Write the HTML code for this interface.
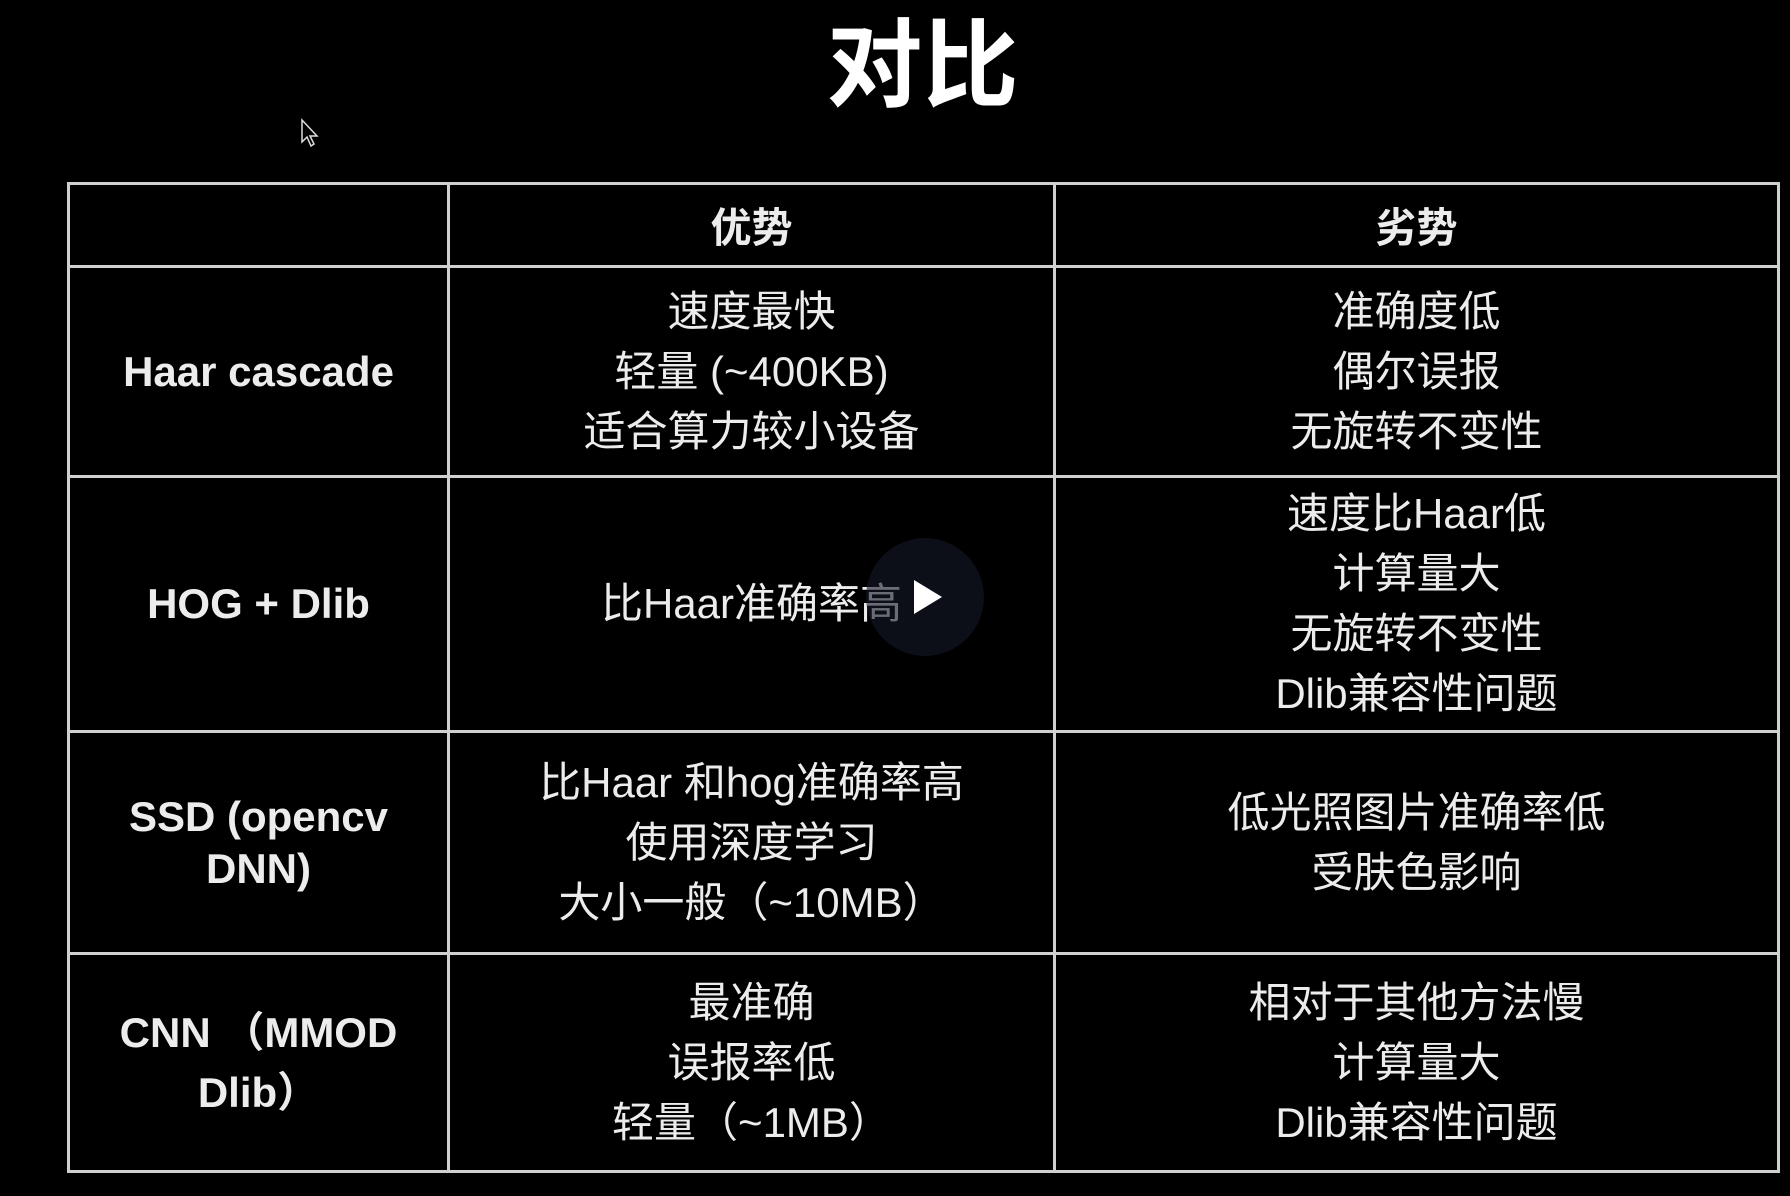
<!DOCTYPE html>
<html><head><meta charset="utf-8"><style>
html,body{margin:0;padding:0;background:#000;width:1790px;height:1196px;overflow:hidden}
body{position:relative;font-family:"Liberation Sans","Noto Sans CJK SC",sans-serif;color:#ececec}
.h{position:absolute;height:3px;background:#d0d0d0}
.v{position:absolute;width:3px;background:#d0d0d0}
.c{position:absolute;display:flex;flex-direction:column;align-items:center;justify-content:center;text-align:center;font-size:42px;line-height:60px;white-space:nowrap}
.b{font-weight:bold;font-size:42px;line-height:52px}
.hd{font-weight:bold;font-size:41px}
.title{position:absolute;left:0;width:1845px;top:-12px;text-align:center;font-size:96px;font-weight:bold;color:#fff}
</style></head><body>
<div class="title">对比</div>
<svg style="position:absolute;left:300px;top:118px" width="22" height="30" viewBox="0 0 22 30"><path d="M2 2 L2 24 L7 19 L11 28 L14 26 L10 18 L17 18 Z" fill="#000" stroke="#ddd" stroke-width="1.5"/></svg>

<div class="h" style="left:67px;width:1713px;top:182px"></div>
<div class="h" style="left:67px;width:1713px;top:265px"></div>
<div class="h" style="left:67px;width:1713px;top:475px"></div>
<div class="h" style="left:67px;width:1713px;top:730px"></div>
<div class="h" style="left:67px;width:1713px;top:952px"></div>
<div class="h" style="left:67px;width:1713px;top:1170px"></div>
<div class="v" style="left:67px;top:182px;height:991px"></div>
<div class="v" style="left:447px;top:182px;height:991px"></div>
<div class="v" style="left:1053px;top:182px;height:991px"></div>
<div class="v" style="left:1777px;top:182px;height:991px"></div>

<div class="c hd" style="left:450px;width:603px;top:188px;height:80px">优势</div>
<div class="c hd" style="left:1056px;width:721px;top:188px;height:80px">劣势</div>

<div class="c b" style="left:70px;width:377px;top:268px;height:207px">Haar cascade</div>
<div class="c" style="left:450px;width:603px;top:268px;height:207px"><div>速度最快</div><div>轻量 (~400KB)</div><div>适合算力较小设备</div></div>
<div class="c" style="left:1056px;width:721px;top:268px;height:207px"><div>准确度低</div><div>偶尔误报</div><div>无旋转不变性</div></div>

<div class="c b" style="left:70px;width:377px;top:478px;height:252px">HOG + Dlib</div>
<div class="c" style="left:450px;width:603px;top:478px;height:252px"><div>比Haar准确率高</div></div>
<div class="c" style="left:1056px;width:721px;top:478px;height:252px"><div>速度比Haar低</div><div>计算量大</div><div>无旋转不变性</div><div>Dlib兼容性问题</div></div>

<div class="c b" style="left:70px;width:377px;top:733px;height:219px"><div>SSD (opencv</div><div>DNN)</div></div>
<div class="c" style="left:450px;width:603px;top:733px;height:219px"><div>比Haar 和hog准确率高</div><div>使用深度学习</div><div>大小一般（~10MB）</div></div>
<div class="c" style="left:1056px;width:721px;top:733px;height:219px"><div>低光照图片准确率低</div><div>受肤色影响</div></div>

<div class="c b" style="left:70px;width:377px;top:955px;height:215px;line-height:60px"><div>CNN （MMOD</div><div>Dlib）</div></div>
<div class="c" style="left:450px;width:603px;top:955px;height:215px"><div>最准确</div><div>误报率低</div><div>轻量（~1MB）</div></div>
<div class="c" style="left:1056px;width:721px;top:955px;height:215px"><div>相对于其他方法慢</div><div>计算量大</div><div>Dlib兼容性问题</div></div>

<div style="position:absolute;left:866px;top:538px;width:118px;height:118px;border-radius:50%;background:rgba(20,24,40,0.6)"></div>
<svg style="position:absolute;left:912px;top:578px" width="32" height="38" viewBox="0 0 32 38"><path d="M2 2 L30 19 L2 36 Z" fill="#fff"/></svg>
</body></html>
